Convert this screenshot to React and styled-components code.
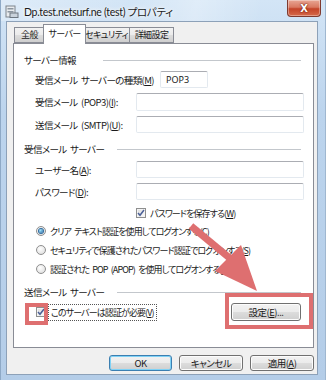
import React from "react";
import styled, { createGlobalStyle } from "styled-components";

const GlobalStyle = createGlobalStyle`
  html, body {
    margin: 0;
    padding: 0;
    background: #fff;
  }
  body {
    width: 326px;
    height: 380px;
    overflow: hidden;
    font-family: "Noto Sans CJK JP", "Noto Sans", sans-serif;
    font-feature-settings: "palt";
    color: #1a1a1a;
  }
`;

const Stage = styled.div`
  position: relative;
  width: 326px;
  height: 380px;
`;

const Window = styled.div`
  width: 326px;
  height: 380px;
  box-sizing: border-box;
  display: flex;
  flex-direction: column;
  padding: 0 7px 5px 5px;
  background: linear-gradient(180deg, #d3e5f6 0%, #bcd4ed 30%, #b4cde8 100%);
  border-left: 1px solid #8ea9c6;
  border-right: 1px solid #9fb7d0;
`;

const TitleBar = styled.div`
  height: 21px;
  margin: 0 -7px 0 -5px;
  padding: 0 4px 0 4px;
  display: flex;
  align-items: center;
  gap: 5px;
  background: linear-gradient(100deg, rgba(255,255,255,0.25) 0%, rgba(255,255,255,0) 40%, rgba(255,255,255,0.3) 60%, rgba(255,255,255,0) 80%);
`;

const TitleIcon = styled.svg`
  width: 14px;
  height: 13px;
  flex: none;
  margin-top: 1px;
`;

const TitleText = styled.div`
  font-family: "Lato", "Noto Sans CJK JP", sans-serif;
  font-size: 10.5px;
  letter-spacing: -0.3px;
  line-height: 14px;
  margin-top: 2px;
  text-shadow: 0 0 6px #fff, 0 0 3px #fff;
  white-space: nowrap;
`;

const CloseButton = styled.div`
  margin-left: auto;
  align-self: flex-start;
  width: 34px;
  height: 17px;
  box-sizing: border-box;
  border: 1px solid #7e3a2f;
  border-top: none;
  border-radius: 0 0 4px 4px;
  background: linear-gradient(180deg, #e8a694 0%, #d97961 45%, #c44429 55%, #d56a4a 100%);
  box-shadow: inset 0 0 0 1px rgba(255,255,255,0.35);
  display: flex;
  align-items: center;
  justify-content: center;
  color: #fff;
  font-family: "DejaVu Sans", sans-serif;
  font-weight: bold;
  font-size: 10px;
  text-shadow: 0 0 2px #6b1a0d, 0 0 1px #6b1a0d;
`;

const Client = styled.div`
  flex: 1;
  display: flex;
  flex-direction: column;
  background: #f0f0f0;
  border: 1px solid #8da1b8;
  padding: 3px 3px 3px 6px;
`;

const TabRow = styled.div`
  height: 18px;
  display: flex;
  align-items: flex-end;
  padding-left: 1px;
  position: relative;
  z-index: 1;
`;

const Tab = styled.div`
  box-sizing: border-box;
  width: ${p => p.$w}px;
  height: ${p => (p.$active ? 20 : 16)}px;
  margin-left: ${p => (p.$active ? -2 : -1)}px;
  margin-right: ${p => (p.$active ? -2 : 0)}px;
  margin-bottom: ${p => (p.$active ? -1 : 0)}px;
  border: 1px solid #898c95;
  border-bottom: ${p => (p.$active ? "none" : "1px solid #898c95")};
  background: ${p => (p.$active ? "#fff" : "linear-gradient(180deg, #f2f2f2 0%, #ebebeb 50%, #dddddd 50%, #cfcfcf 100%)")};
  position: relative;
  z-index: ${p => (p.$active ? 2 : 1)};
  font-size: 9px;
  letter-spacing: -0.6px;
  line-height: ${p => (p.$active ? 17 : 14)}px;
  text-align: center;
  white-space: nowrap;
  &:first-child {
    margin-left: 0;
  }
`;

const Panel = styled.div`
  flex: 1;
  background: #fff;
  border: 1px solid #898c95;
  padding: 9px 12px 0 10px;
  display: flex;
  flex-direction: column;
`;

const Heading = styled.div`
  height: 14px;
  margin-top: ${p => p.$mt || 0}px;
  display: grid;
  grid-template-columns: ${p => p.$labelW}px 1fr;
  align-items: center;
  font-size: 9.5px;
  letter-spacing: -0.6px;
  word-spacing: 2px;
  white-space: nowrap;
  &::after {
    content: "";
    height: 1px;
    background: #c3c7cc;
  }
`;

const FieldRow = styled.div`
  margin: ${p => p.$mt}px 0 0 11px;
  height: ${p => p.$h || 17}px;
  display: grid;
  grid-template-columns: ${p => p.$labelW}px ${p => p.$inputW}px;
  align-items: center;
  font-size: 9.5px;
  letter-spacing: -0.6px;
  word-spacing: 2px;
  white-space: nowrap;
`;

const Input = styled.div`
  box-sizing: border-box;
  height: 100%;
  border: 1px solid #e3e9ef;
  border-top-color: #abadb3;
  border-radius: 2px;
  background: #fff;
  font-size: 9px;
  letter-spacing: 0;
  line-height: 15px;
  padding-left: 5px;
  font-family: "Noto Sans", sans-serif;
`;

const OptionRow = styled.div`
  margin: ${p => p.$mt}px 0 0 ${p => p.$ml}px;
  height: 14px;
  display: flex;
  align-items: center;
  gap: 4px;
  font-size: 9px;
  letter-spacing: -0.9px;
  word-spacing: 2px;
  white-space: nowrap;
`;

const Check = styled.span`
  box-sizing: border-box;
  width: 10px;
  height: 10px;
  flex: none;
  border: 1px solid #8e8f8f;
  background: linear-gradient(135deg, #dcdcdc, #fbfbfb);
  box-shadow: inset 0 0 0 1px #f4f4f4;
  display: flex;
  align-items: center;
  justify-content: center;
`;

const Radio = styled.span`
  box-sizing: border-box;
  width: 10px;
  height: 10px;
  flex: none;
  border-radius: 50%;
  border: 1px solid #8f8f8f;
  background: radial-gradient(circle at 40% 35%, #ffffff, #d8d8d8);
  display: flex;
  align-items: center;
  justify-content: center;
  &::after {
    content: "";
    display: ${p => (p.$on ? "block" : "none")};
    width: 4px;
    height: 4px;
    border-radius: 50%;
    background: radial-gradient(circle at 35% 35%, #9ee3fb, #1b5d9e);
    box-shadow: 0 0 0 1px #2e6b9f;
  }
`;

const FocusLabel = styled.span`
  outline: 1px dotted #555;
  outline-offset: 1px;
  padding: 0 1px;
`;

const BottomRow = styled.div`
  margin-top: 4px;
  height: 18px;
  display: flex;
  align-items: center;
  justify-content: space-between;
  padding-left: 12px;
`;

const Button = styled.div`
  box-sizing: border-box;
  width: ${p => p.$w}px;
  height: ${p => p.$h || 16}px;
  border: 1px solid ${p => (p.$default ? "#3c7fb1" : "#707070")};
  border-radius: 3px;
  background: linear-gradient(180deg, #f2f2f2 0%, #ebebeb 50%, #dddddd 50%, #cfcfcf 100%);
  box-shadow: inset 0 0 0 1px ${p => (p.$default ? "#7fd2f6" : "#fcfcfc")};
  font-size: 9.5px;
  letter-spacing: -0.5px;
  display: flex;
  align-items: center;
  justify-content: center;
  white-space: nowrap;
`;

const ButtonBar = styled.div`
  margin-top: 7px;
  height: 16px;
  display: flex;
  justify-content: flex-end;
  gap: 7px;
`;

const Overlay = styled.svg`
  position: absolute;
  left: 0;
  top: 0;
  width: 326px;
  height: 380px;
  pointer-events: none;
`;

const CheckMark = () => (
  <svg width="8" height="8" viewBox="0 0 8 8">
    <path d="M1 4 L3 6.3 L7 1" fill="none" stroke="#4a5f97" strokeWidth="1.5" />
  </svg>
);

export default function App() {
  return (
    <Stage>
      <GlobalStyle />
      <Window>
        <TitleBar>
          <TitleIcon viewBox="0 0 14 13">
            <rect x="1" y="1" width="9" height="11" fill="#e9ecef" stroke="#7d848c" strokeWidth="1" />
            <rect x="2.5" y="3" width="6" height="1.5" fill="#8c96a0" />
            <rect x="2.5" y="6" width="6" height="1.5" fill="#8c96a0" />
            <rect x="5" y="8" width="8" height="4.5" fill="#c9d2db" stroke="#6c7680" strokeWidth="1" />
          </TitleIcon>
          <TitleText>Dp.test.netsurf.ne (test) プロパティ</TitleText>
          <CloseButton>X</CloseButton>
        </TitleBar>
        <Client>
          <TabRow>
            <Tab $w={31}>全般</Tab>
            <Tab $w={43} $active>サーバー</Tab>
            <Tab $w={47}>セキュリティ</Tab>
            <Tab $w={45}>詳細設定</Tab>
          </TabRow>
          <Panel>
            <Heading $labelW={79}>サーバー情報</Heading>
            <FieldRow $mt={4} $labelW={125} $inputW={48}>
              <span>受信メール サーバーの種類(<u>M</u>)</span>
              <Input>POP3</Input>
            </FieldRow>
            <FieldRow $mt={5} $h={18} $labelW={101} $inputW={168}>
              <span>受信メール (POP3)(<u>I</u>):</span>
              <Input />
            </FieldRow>
            <FieldRow $mt={5} $labelW={101} $inputW={168}>
              <span>送信メール (SMTP)(<u>U</u>):</span>
              <Input />
            </FieldRow>
            <Heading $mt={9} $labelW={93}>受信メール サーバー</Heading>
            <FieldRow $mt={5} $labelW={101} $inputW={168}>
              <span>ユーザー名(<u>A</u>):</span>
              <Input />
            </FieldRow>
            <FieldRow $mt={5} $labelW={101} $inputW={168}>
              <span>パスワード(<u>D</u>):</span>
              <Input />
            </FieldRow>
            <OptionRow $mt={6} $ml={112}>
              <Check><CheckMark /></Check>
              <span>パスワードを保存する(<u>W</u>)</span>
            </OptionRow>
            <OptionRow $mt={4} $ml={12}>
              <Radio $on />
              <span>クリア テキスト認証を使用してログオンする(<u>C</u>)</span>
            </OptionRow>
            <OptionRow $mt={5} $ml={12}>
              <Radio />
              <span>セキュリティで保護されたパスワード認証でログオンする(<u>S</u>)</span>
            </OptionRow>
            <OptionRow $mt={5} $ml={12}>
              <Radio />
              <span>認証された POP (APOP) を使用してログオンする(<u>P</u>)</span>
            </OptionRow>
            <Heading $mt={9} $labelW={93}>送信メール サーバー</Heading>
            <BottomRow>
              <OptionRow $mt={0} $ml={0}>
                <Check><CheckMark /></Check>
                <FocusLabel>このサーバーは認証が必要(<u>V</u>)</FocusLabel>
              </OptionRow>
              <Button $w={70} $h={18}>設定(<u>E</u>)...</Button>
            </BottomRow>
          </Panel>
          <ButtonBar>
            <Button $w={63} $default>OK</Button>
            <Button $w={64}>キャンセル</Button>
            <Button $w={64}>適用(<u>A</u>)</Button>
          </ButtonBar>
        </Client>
      </Window>
      <Overlay viewBox="0 0 326 380">
        <rect x="27" y="305" width="19" height="18" fill="none" stroke="#de6f70" strokeWidth="4" />
        <rect x="227" y="295" width="84" height="32" fill="none" stroke="#de6f70" strokeWidth="4" />
        <line x1="191" y1="226" x2="232" y2="260" stroke="#de6f70" strokeWidth="7" />
        <polygon points="215,271 241,245 257,291" fill="#de6f70" />
      </Overlay>
    </Stage>
  );
}
